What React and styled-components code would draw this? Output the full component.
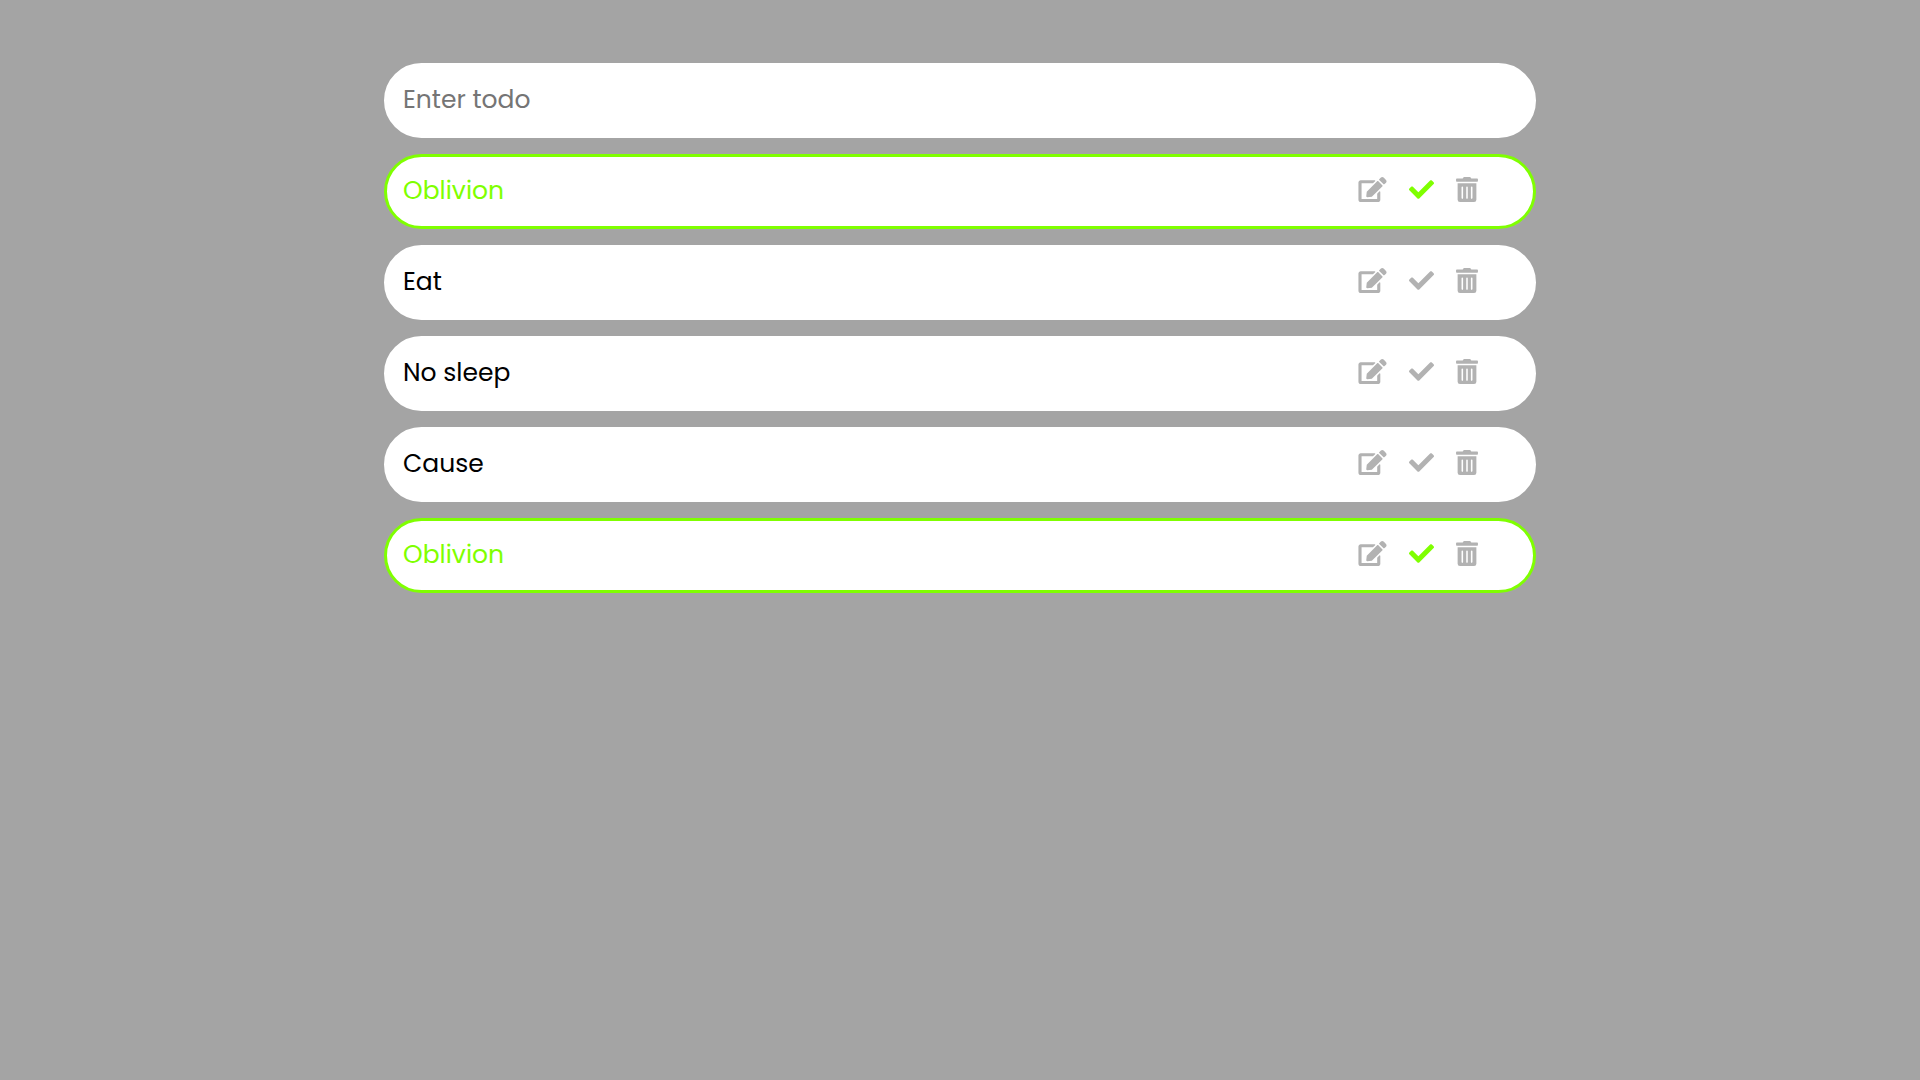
import React, { useState } from "react";
import styled, { createGlobalStyle, css } from "styled-components";
import { FaCheck, FaEdit, FaTrashAlt } from "react-icons/fa";

const GlobalStyle = createGlobalStyle`
  *, *::before, *::after {
    box-sizing: border-box;
  }

  body {
    margin: 0;
    min-height: 100vh;
    background: #a4a4a4;
    font-family: Poppins, Inter, sans-serif;
    font-size: 25px;
    line-height: 38px;
  }
`;

const Page = styled.main`
  display: flex;
  flex-direction: column;
  gap: 16px;
  width: 60%;
  margin: 0 auto;
  padding: 63px 0;
`;

const pill = css`
  width: 100%;
  min-height: 75px;
  border: 3px solid #fff;
  border-radius: 38px;
  background: #fff;
`;

const TodoInput = styled.input`
  ${pill}
  padding: 15px 16px 16px;
  color: #000;
  font: inherit;
  outline: none;

  &::placeholder {
    color: #757575;
    opacity: 1;
  }
`;

const TodoList = styled.ul`
  display: flex;
  flex-direction: column;
  gap: 16px;
  margin: 0;
  padding: 0;
  list-style: none;
`;

const TodoItem = styled.li`
  ${pill}
  display: flex;
  align-items: center;
  justify-content: space-between;
  padding: 15px 55px 16px 16px;
  border-color: ${({ $done }) => ($done ? "#7fff00" : "#fff")};
  color: ${({ $done }) => ($done ? "#7fff00" : "#000")};
`;

const Actions = styled.div`
  display: flex;
  align-items: center;
  gap: 22px;
  padding-bottom: 3px;
`;

const IconButton = styled.button`
  display: flex;
  padding: 0;
  border: 0;
  background: none;
  color: ${({ $active }) => ($active ? "#7fff00" : "#b2b2b2")};
  cursor: pointer;

  svg {
    width: ${({ $width }) => $width}px;
    height: 25px;
  }
`;

const initialTodos = [
  { id: 1, text: "Oblivion", done: true },
  { id: 2, text: "Eat", done: false },
  { id: 3, text: "No sleep", done: false },
  { id: 4, text: "Cause", done: false },
  { id: 5, text: "Oblivion", done: true },
];

export default function App() {
  const [todos, setTodos] = useState(initialTodos);
  const [draft, setDraft] = useState("");

  const save = (event) => {
    event.preventDefault();
    const text = draft.trim();
    if (!text) return;
    setTodos([...todos, { id: Date.now(), text, done: false }]);
    setDraft("");
  };

  const toggle = (id) =>
    setTodos(todos.map((t) => (t.id === id ? { ...t, done: !t.done } : t)));

  const remove = (id) => setTodos(todos.filter((t) => t.id !== id));

  const edit = (todo) => {
    setDraft(todo.text);
    remove(todo.id);
  };

  return (
    <>
      <GlobalStyle />
      <Page>
        <form onSubmit={save}>
          <TodoInput
            type="text"
            aria-label="Enter todo"
            placeholder="Enter todo"
            value={draft}
            onChange={(event) => setDraft(event.target.value)}
          />
        </form>
        <TodoList>
          {todos.map((todo) => (
            <TodoItem key={todo.id} $done={todo.done}>
              <span>{todo.text}</span>
              <Actions>
                <IconButton
                  type="button"
                  aria-label="Edit"
                  $width={29}
                  onClick={() => edit(todo)}
                >
                  <FaEdit />
                </IconButton>
                <IconButton
                  type="button"
                  aria-label="Done"
                  aria-pressed={todo.done}
                  $active={todo.done}
                  $width={25}
                  onClick={() => toggle(todo.id)}
                >
                  <FaCheck />
                </IconButton>
                <IconButton
                  type="button"
                  aria-label="Delete"
                  $width={22}
                  onClick={() => remove(todo.id)}
                >
                  <FaTrashAlt />
                </IconButton>
              </Actions>
            </TodoItem>
          ))}
        </TodoList>
      </Page>
    </>
  );
}
